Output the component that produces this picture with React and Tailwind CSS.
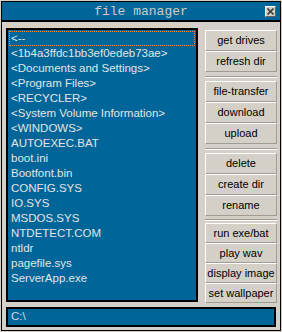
import React from 'react'

const files = [
  '<--',
  '<1b4a3ffdc1bb3ef0edeb73ae>',
  '<Documents and Settings>',
  '<Program Files>',
  '<RECYCLER>',
  '<System Volume Information>',
  '<WINDOWS>',
  'AUTOEXEC.BAT',
  'boot.ini',
  'Bootfont.bin',
  'CONFIG.SYS',
  'IO.SYS',
  'MSDOS.SYS',
  'NTDETECT.COM',
  'ntldr',
  'pagefile.sys',
  'ServerApp.exe',
]

const groups = [
  { items: ['get drives', 'refresh dir'], gap: 'h-[9px]' },
  { items: ['file-transfer', 'download', 'upload'], gap: 'h-[9px]' },
  { items: ['delete', 'create dir', 'rename'], gap: 'h-[7px]' },
  { items: ['run exe/bat', 'play wav', 'display image', 'set wallpaper'], short: true },
]

function Btn({ label, short }) {
  return (
    <button
      className={`w-full ${short ? 'h-[20px]' : 'h-[21px]'} px-0 bg-[#d4d0c8] border border-t-white border-l-white border-b-[#a09c94] border-r-[#a09c94] text-[11px] leading-none text-black whitespace-nowrap flex items-center justify-center`}
    >
      {label}
    </button>
  )
}

function Separator({ h }) {
  return (
    <div className={`${h} flex items-center`}>
      <div className="w-full h-[2px] border-t border-t-[#a09c94] border-b border-b-white" />
    </div>
  )
}

export default function App() {
  return (
    <div
      className="w-[282px] h-[332px] bg-[#d4d0c8] pt-px pl-px"
      style={{ fontFamily: '"Liberation Sans", Arial, sans-serif' }}
    >
      <div className="w-[280px] h-[330px] border border-black flex flex-col">
        <div className="relative h-[20px] bg-[#006699] border-b-2 border-black flex items-center justify-center">
          <span
            className="text-[13px] leading-none text-[#cccccc]"
            style={{ fontFamily: '"Liberation Mono", "Courier New", monospace' }}
          >
            file manager
          </span>
          <div className="absolute right-[4px] top-[4px] w-[11px] h-[11px] bg-[#d4d0c8] border border-t-white border-l-white border-b-[#606060] border-r-[#606060] flex items-center justify-center">
            <svg width="7" height="7" viewBox="0 0 7 7">
              <path d="M0.5 0.5 L6.5 6.5 M6.5 0.5 L0.5 6.5" stroke="#404040" strokeWidth="1.6" />
            </svg>
          </div>
        </div>

        <div className="flex-1 pl-[4px] pt-[6px]">
          <div className="flex">
            <div className="w-[192px] h-[274px] border-2 border-black bg-[#006699] pt-px pl-px pr-px overflow-hidden">
              {files.map((f, i) => (
                <div
                  key={f}
                  className={`h-[15px] px-[1px] text-[11.5px] leading-[13px] text-[#e4e4e4] whitespace-nowrap border border-dotted ${
                    i === 0 ? 'border-[#ff8c3c]' : 'border-transparent'
                  }`}
                >
                  {f}
                </div>
              ))}
            </div>

            <div className="ml-[7px] w-[72px] pt-[2px] flex flex-col">
              {groups.map((g, gi) => (
                <React.Fragment key={gi}>
                  {g.items.map(b => (
                    <Btn key={b} label={b} short={g.short} />
                  ))}
                  {g.gap && <Separator h={g.gap} />}
                </React.Fragment>
              ))}
            </div>
          </div>

          <div className="mt-[4px] w-[270px] h-[20px] border-2 border-black bg-[#006699] flex items-center pl-[3px] text-[11.5px] leading-none text-[#d0dce8]">
            C:\
          </div>
        </div>
      </div>
    </div>
  )
}
